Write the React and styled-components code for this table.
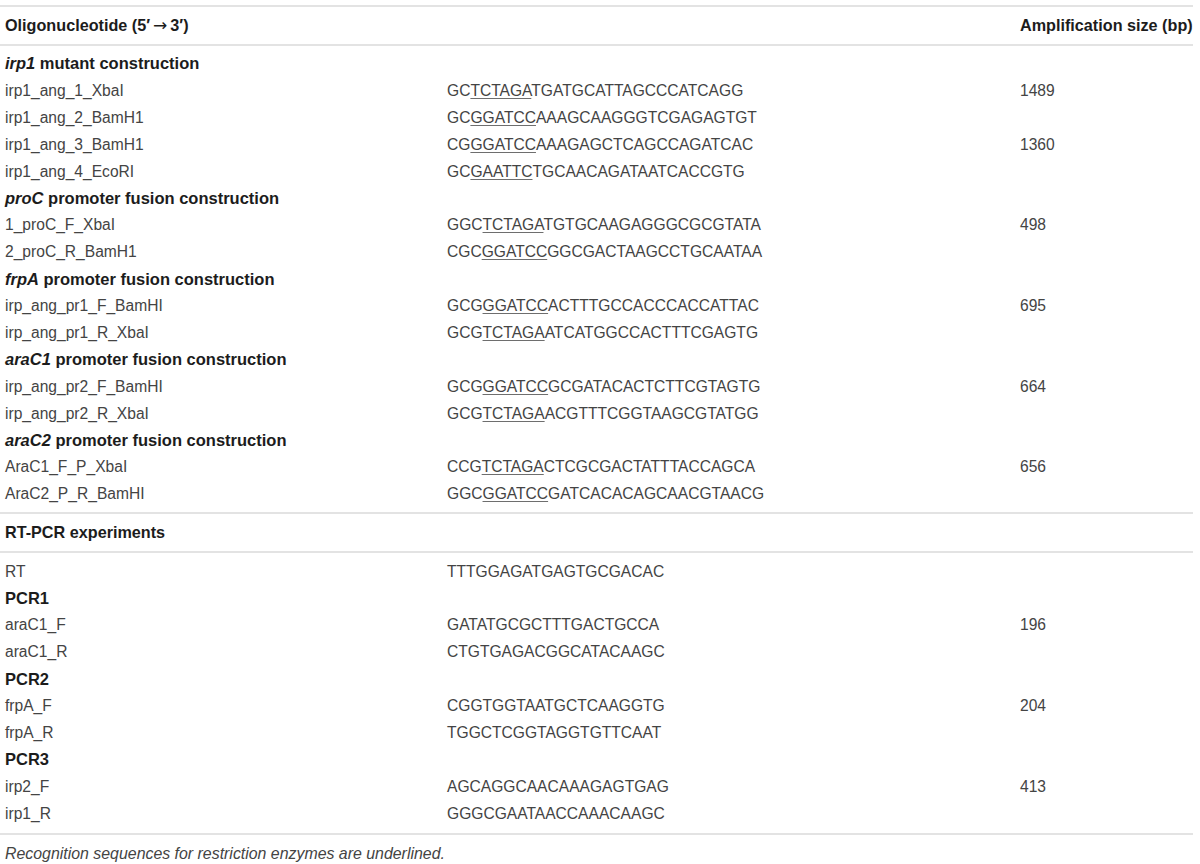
import React from "react";
import styled, { createGlobalStyle } from "styled-components";

const GlobalStyle = createGlobalStyle`
  body {
    margin: 0;
    background: #ffffff;
    font-family: "Liberation Sans", Arial, sans-serif;
  }
`;

const Table = styled.div`
  width: 1193px;
  margin-top: 5px;
  border-top: 2px solid #e3e3e3;
  font-size: 15.6px;
  color: #444;
`;

const Band = styled.div`
  display: grid;
  grid-template-columns: 442px 573px 1fr;
  align-items: center;
  height: 37px;
  padding-left: 5px;
  border-bottom: 2px solid #e3e3e3;
  border-top: ${(p) => (p.ruled ? "2px solid #e3e3e3" : "none")};
  font-weight: bold;
  font-size: 16.2px;
  color: #1c1c1c;
  white-space: nowrap;
`;

const Arrow = styled.span`
  font-family: "DejaVu Sans", sans-serif;
  font-weight: normal;
  font-size: 17px;
  line-height: 1;
  margin: 0 3px;
`;

const Body = styled.div`
  padding: ${(p) => p.pad || "4.5px 0"};
  border-bottom: ${(p) => (p.last ? "2px solid #e3e3e3" : "none")};
`;

const Row = styled.div`
  display: grid;
  grid-template-columns: 442px 573px 1fr;
  align-items: center;
  height: 26.9px;
  padding-left: 5px;
  white-space: nowrap;
`;

const Group = styled.div`
  font-weight: bold;
  font-size: 16.5px;
  color: #1c1c1c;
`;

const Site = styled.span`
  text-decoration: underline;
  text-decoration-color: #6e6e6e;
  text-decoration-thickness: 1px;
  text-underline-offset: 2px;
`;

const Note = styled.p`
  margin: 0;
  padding: 10px 0 0 5px;
  font-style: italic;
  font-size: 15.9px;
  color: #444;
`;

const constructs = [
  { group: ["irp1", " mutant construction"] },
  { name: "irp1_ang_1_XbaI", seq: ["GC", "TCTAGA", "TGATGCATTAGCCCATCAGG"], size: "1489" },
  { name: "irp1_ang_2_BamH1", seq: ["GC", "GGATCC", "AAAGCAAGGGTCGAGAGTGT"] },
  { name: "irp1_ang_3_BamH1", seq: ["CG", "GGATCC", "AAAGAGCTCAGCCAGATCAC"], size: "1360" },
  { name: "irp1_ang_4_EcoRI", seq: ["GC", "GAATTC", "TGCAACAGATAATCACCGTG"] },
  { group: ["proC", " promoter fusion construction"] },
  { name: "1_proC_F_XbaI", seq: ["GGC", "TCTAGA", "TGTGCAAGAGGGCGCGTATA"], size: "498" },
  { name: "2_proC_R_BamH1", seq: ["CGC", "GGATCC", "GGCGACTAAGCCTGCAATAA"] },
  { group: ["frpA", " promoter fusion construction"] },
  { name: "irp_ang_pr1_F_BamHI", seq: ["GCG", "GGATCC", "ACTTTGCCACCCACCATTAC"], size: "695" },
  { name: "irp_ang_pr1_R_XbaI", seq: ["GCG", "TCTAGA", "ATCATGGCCACTTTCGAGTG"] },
  { group: ["araC1", " promoter fusion construction"] },
  { name: "irp_ang_pr2_F_BamHI", seq: ["GCG", "GGATCC", "GCGATACACTCTTCGTAGTG"], size: "664" },
  { name: "irp_ang_pr2_R_XbaI", seq: ["GCG", "TCTAGA", "ACGTTTCGGTAAGCGTATGG"] },
  { group: ["araC2", " promoter fusion construction"] },
  { name: "AraC1_F_P_XbaI", seq: ["CCG", "TCTAGA", "CTCGCGACTATTTACCAGCA"], size: "656" },
  { name: "AraC2_P_R_BamHI", seq: ["GGC", "GGATCC", "GATCACACAGCAACGTAACG"] },
];

const rtpcr = [
  { name: "RT", seq: ["TTTGGAGATGAGTGCGACAC"] },
  { group: ["", "PCR1"] },
  { name: "araC1_F", seq: ["GATATGCGCTTTGACTGCCA"], size: "196" },
  { name: "araC1_R", seq: ["CTGTGAGACGGCATACAAGC"] },
  { group: ["", "PCR2"] },
  { name: "frpA_F", seq: ["CGGTGGTAATGCTCAAGGTG"], size: "204" },
  { name: "frpA_R", seq: ["TGGCTCGGTAGGTGTTCAAT"] },
  { group: ["", "PCR3"] },
  { name: "irp2_F", seq: ["AGCAGGCAACAAAGAGTGAG"], size: "413" },
  { name: "irp1_R", seq: ["GGGCGAATAACCAAACAAGC"] },
];

const renderRows = (rows) =>
  rows.map((r, i) =>
    r.group ? (
      <Row key={i}>
        <Group>
          {r.group[0] && <i>{r.group[0]}</i>}
          {r.group[1]}
        </Group>
      </Row>
    ) : (
      <Row key={i}>
        <span>{r.name}</span>
        <span>
          {r.seq.length === 3 ? (
            <>
              {r.seq[0]}
              <Site>{r.seq[1]}</Site>
              {r.seq[2]}
            </>
          ) : (
            r.seq[0]
          )}
        </span>
        <span>{r.size || ""}</span>
      </Row>
    )
  );

export default function App() {
  return (
    <>
      <GlobalStyle />
      <Table>
        <Band>
          <span>
            Oligonucleotide (5′<Arrow>→</Arrow>3′)
          </span>
          <span />
          <span>Amplification size (bp)</span>
        </Band>
        <Body>{renderRows(constructs)}</Body>
        <Band ruled>
          <span>RT-PCR experiments</span>
        </Band>
        <Body pad="5px 0 6px" last>
          {renderRows(rtpcr)}
        </Body>
        <Note>Recognition sequences for restriction enzymes are underlined.</Note>
      </Table>
    </>
  );
}
